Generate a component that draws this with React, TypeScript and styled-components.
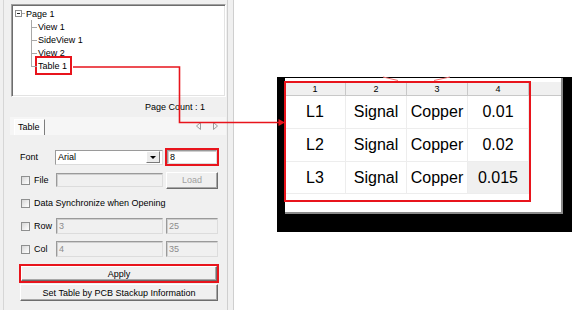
import React from 'react';
import styled, { createGlobalStyle } from 'styled-components';

const RED = '#e8141c';

const GlobalStyle = createGlobalStyle`
  html, body { margin: 0; padding: 0; background: #fff; width: 572px; height: 310px; overflow: hidden; }
  body { font-family: "Liberation Sans", Arial, sans-serif; font-size: 9px; color: #000; }
  * { box-sizing: border-box; }
`;

const Page = styled.div`
  position: relative;
  display: flex;
  width: 572px;
  height: 310px;
`;

const LeftPanel = styled.div`
  width: 228px;
  height: 100%;
  background: #f0f0f0;
  border-right: 1px solid #cfcfcf;
  box-shadow: inset 3px 0 0 #f0f0f0, inset 4px 0 0 #d6d6d6;
  display: flex;
  flex-direction: column;
`;

const Splitter = styled.div`
  width: 6px;
  height: 100%;
  background: #f0f0f0;
  border-right: 1px solid #cfcfcf;
`;

const RightArea = styled.div`
  flex: 1;
  padding: 77px 0 0 43px;
  background: #fff;
`;

/* ---------- tree ---------- */
const TreeBox = styled.div`
  margin: 4px 0 0 11px;
  width: 215px;
  height: 93px;
  background: #fff;
  border-style: solid;
  border-width: 1px;
  border-color: #a0a0a0 #ffffff #ffffff #a0a0a0;
  box-shadow: inset 1px 1px 0 #6d6d6d, inset -1px -1px 0 #e3e3e3;
  padding: 2px 0 0 3px;
`;

const TreeRow = styled.div`
  height: 13px;
  display: flex;
  align-items: center;
  white-space: nowrap;
`;

const ExpandBox = styled.span`
  position: relative;
  width: 7px;
  height: 7px;
  border: 1px solid #8f8f8f;
  background: #fff;
  &::after {
    content: '';
    position: absolute;
    left: 1px;
    top: 2px;
    width: 3px;
    height: 1px;
    background: #222;
  }
`;

const Tick = styled.span`
  width: 3px;
  height: 1px;
  background: #a8a8a8;
  margin-right: 1px;
`;

const ChildList = styled.div`
  margin-left: 16px;
`;

const ChildRow = styled(TreeRow)<{ $last?: boolean }>`
  position: relative;
  padding-left: 7px;
  &::before {
    content: '';
    position: absolute;
    left: 0;
    top: 0;
    width: 1px;
    height: ${(p) => (p.$last ? '50%' : '100%')};
    background: #a8a8a8;
  }
  &::after {
    content: '';
    position: absolute;
    left: 0;
    top: 50%;
    width: 6px;
    height: 1px;
    background: #a8a8a8;
  }
`;

const TreeLabel = styled.span<{ $marked?: boolean }>`
  display: inline-flex;
  align-items: center;
  ${(p) =>
    p.$marked
      ? `
    height: 19px;
    border: 2px solid ${RED};
    padding: 0 3px 0 1px;
    margin-left: -3px;
  `
      : ''}
`;

/* ---------- page count + tab ---------- */
const PageCountRow = styled.div`
  height: 20px;
  display: flex;
  justify-content: flex-end;
  align-items: center;
  padding-right: 22px;
`;

const TabStrip = styled.div`
  margin-left: 10px;
  width: 216px;
  height: 18px;
  display: flex;
  align-items: flex-end;
  background: #f6f6f6;
`;

const Tab = styled.div`
  margin-left: 4px;
  width: 31px;
  height: 16px;
  background: #fafafa;
  border-top: 1px solid #fff;
  border-left: 1px solid #fff;
  border-right: 1px solid #7d7d7d;
  padding-left: 3px;
  line-height: 14px;
`;

const TabArrows = styled.svg`
  margin-left: auto;
  margin-right: 7px;
  align-self: center;
`;

const TabPage = styled.div`
  flex: 1;
  display: flex;
  flex-direction: column;
  padding: 10.5px 0 0 20px;
`;

/* ---------- form ---------- */
const FormRow = styled.div`
  height: 23px;
  display: flex;
  align-items: center;
`;

const FieldLabel = styled.span<{ $w: number }>`
  width: ${(p) => p.$w}px;
  white-space: nowrap;
`;

const CheckGroup = styled.label<{ $w?: number }>`
  display: flex;
  align-items: center;
  gap: 4px;
  white-space: nowrap;
  ${(p) => (p.$w ? `width: ${p.$w}px;` : '')}
`;

const CheckBox = styled.span`
  width: 9px;
  height: 9px;
  margin-left: 1px;
  border: 1px solid #8e8f8f;
  background: linear-gradient(135deg, #d6d6d6 0%, #eeeeee 55%, #ffffff 100%);
`;

const TextBox = styled.div<{ $w: number; $h: number; $disabled?: boolean }>`
  width: ${(p) => p.$w}px;
  height: ${(p) => p.$h}px;
  background: ${(p) => (p.$disabled ? '#f0f0f0' : '#fff')};
  color: ${(p) => (p.$disabled ? '#8c8c8c' : '#000')};
  border: 1px solid;
  border-color: #9a9a9a #dcdcdc #dcdcdc #9a9a9a;
  box-shadow: inset 1px 1px 0 #cfcfcf;
  padding-left: 2px;
  display: flex;
  align-items: center;
`;

const Combo = styled.div`
  width: 108px;
  height: 15px;
  background: #fff;
  border: 1px solid;
  border-color: #9a9a9a #dcdcdc #dcdcdc #9a9a9a;
  display: flex;
  align-items: center;
  padding: 0 1px 0 2px;
`;

const ComboText = styled.span`
  flex: 1;
`;

const DropButton = styled.span`
  width: 14px;
  height: 12px;
  background: #ececec;
  border: 1px solid;
  border-color: #fff #7a7a7a #7a7a7a #fff;
  display: flex;
  align-items: center;
  justify-content: center;
  margin-right: 1px;
  &::after {
    content: '';
    width: 0;
    height: 0;
    border-left: 3px solid transparent;
    border-right: 3px solid transparent;
    border-top: 3px solid #000;
  }
`;

const RedFrame = styled.div<{ $w: number; $h: number; $ml?: number }>`
  width: ${(p) => p.$w}px;
  height: ${(p) => p.$h}px;
  margin-left: ${(p) => p.$ml ?? 0}px;
  border: 2px solid ${RED};
  display: flex;
`;

const Button = styled.div<{ $w?: number; $h?: number; $disabled?: boolean }>`
  ${(p) => (p.$w ? `width: ${p.$w}px;` : 'flex: 1;')}
  height: ${(p) => (p.$h ? `${p.$h}px` : 'auto')};
  background: #f0f0f0;
  color: ${(p) => (p.$disabled ? '#a0a0a0' : '#000')};
  border: 1px solid;
  border-color: #ffffff #6d6d6d #6d6d6d #ffffff;
  box-shadow: inset -1px -1px 0 #a8a8a8;
  display: flex;
  align-items: center;
  justify-content: center;
  white-space: nowrap;
`;

const Gap = styled.span<{ $w: number }>`
  width: ${(p) => p.$w}px;
  flex: none;
`;

const ButtonStack = styled.div`
  display: flex;
  flex-direction: column;
  gap: 1px;
  margin-top: 3.5px;
`;

/* ---------- table preview ---------- */
const BlackFrame = styled.div`
  width: 295px;
  height: 155px;
  background: #000;
  padding: 1px 9px 18px 8px;
  display: flex;
`;

const GridWindow = styled.div`
  position: relative;
  flex: 1;
  background: #fff;
  padding-top: 4px;
  border-right: 2px solid #8a8a8a;
  border-bottom: 2px solid #8a8a8a;
`;

const Grid = styled.div`
  display: grid;
  grid-template-columns: 61px 61px 61px 61px 1fr;
  grid-template-rows: 14px 33px 33px 32px;
`;

const HeadCell = styled.div<{ $filler?: boolean }>`
  background: #f0f0f0;
  border-bottom: 1px solid #c8c8c8;
  border-right: ${(p) => (p.$filler ? 'none' : '1px solid #c8c8c8')};
  font-size: 9px;
  display: flex;
  align-items: center;
  justify-content: center;
`;

const Cell = styled.div<{ $selected?: boolean }>`
  background: ${(p) => (p.$selected ? '#f0f0f0' : '#fff')};
  border-right: 1px solid #ededed;
  border-bottom: 1px solid #ededed;
  font-size: 16px;
  display: flex;
  align-items: center;
  justify-content: center;
`;

const EmptyCell = styled.div``;

const Highlight = styled.div`
  position: absolute;
  left: -1px;
  top: 3px;
  width: 247px;
  height: 121px;
  border: 2px solid ${RED};
  pointer-events: none;
`;

const Overlay = styled.svg`
  position: absolute;
  left: 0;
  top: 0;
  pointer-events: none;
`;

const rows = [
  ['L1', 'Signal', 'Copper', '0.01'],
  ['L2', 'Signal', 'Copper', '0.02'],
  ['L3', 'Signal', 'Copper', '0.015'],
];

export default function App() {
  return (
    <>
      <GlobalStyle />
      <Page>
        <LeftPanel>
          <TreeBox>
            <TreeRow>
              <ExpandBox />
              <Tick />
              <TreeLabel>Page 1</TreeLabel>
            </TreeRow>
            <ChildList>
              <ChildRow>
                <TreeLabel>View 1</TreeLabel>
              </ChildRow>
              <ChildRow>
                <TreeLabel>SideView 1</TreeLabel>
              </ChildRow>
              <ChildRow>
                <TreeLabel>View 2</TreeLabel>
              </ChildRow>
              <ChildRow $last>
                <TreeLabel $marked>Table 1</TreeLabel>
              </ChildRow>
            </ChildList>
          </TreeBox>

          <PageCountRow>Page Count : 1</PageCountRow>

          <TabStrip>
            <Tab>Table</Tab>
            <TabArrows width="24" height="8" viewBox="0 0 24 8">
              <polygon points="5.5,0.5 5.5,7.5 1.5,4" fill="none" stroke="#9a9a9a" strokeWidth="1" />
              <polygon points="18.5,0.5 18.5,7.5 22.5,4" fill="none" stroke="#9a9a9a" strokeWidth="1" />
            </TabArrows>
          </TabStrip>

          <TabPage>
            <FormRow>
              <FieldLabel $w={35}>Font</FieldLabel>
              <Combo>
                <ComboText>Arial</ComboText>
                <DropButton />
              </Combo>
              <Gap $w={2} />
              <RedFrame $w={54} $h={18}>
                <TextBox $w={50} $h={14}>8</TextBox>
              </RedFrame>
            </FormRow>

            <FormRow>
              <CheckGroup $w={36}>
                <CheckBox />
                File
              </CheckGroup>
              <TextBox $w={107} $h={14} $disabled />
              <Gap $w={3} />
              <Button $w={52} $h={17} $disabled>
                Load
              </Button>
            </FormRow>

            <FormRow>
              <CheckGroup>
                <CheckBox />
                Data Synchronize when Opening
              </CheckGroup>
            </FormRow>

            <FormRow>
              <CheckGroup $w={36}>
                <CheckBox />
                Row
              </CheckGroup>
              <TextBox $w={107} $h={16} $disabled>
                3
              </TextBox>
              <Gap $w={3} />
              <TextBox $w={52} $h={16} $disabled>
                25
              </TextBox>
            </FormRow>

            <FormRow>
              <CheckGroup $w={36}>
                <CheckBox />
                Col
              </CheckGroup>
              <TextBox $w={107} $h={16} $disabled>
                4
              </TextBox>
              <Gap $w={3} />
              <TextBox $w={52} $h={16} $disabled>
                35
              </TextBox>
            </FormRow>

            <ButtonStack>
              <RedFrame $w={200} $h={19} $ml={-1}>
                <Button>Apply</Button>
              </RedFrame>
              <Button $w={198} $h={17}>
                Set Table by PCB Stackup Information
              </Button>
            </ButtonStack>
          </TabPage>
        </LeftPanel>
        <Splitter />

        <RightArea>
          <BlackFrame>
            <GridWindow>
              <Grid>
                {['1', '2', '3', '4'].map((h) => (
                  <HeadCell key={h}>{h}</HeadCell>
                ))}
                <HeadCell $filler />
                {rows.map((r, ri) => (
                  <React.Fragment key={ri}>
                    {r.map((c, ci) => (
                      <Cell key={ci} $selected={ri === 2 && ci === 3}>
                        {c}
                      </Cell>
                    ))}
                    <EmptyCell />
                  </React.Fragment>
                ))}
              </Grid>
              <Highlight />
            </GridWindow>
          </BlackFrame>
        </RightArea>

        <Overlay width="572" height="310" viewBox="0 0 572 310">
          <path d="M73 67 H179.5 V122.5 H280" fill="none" stroke={RED} strokeWidth="1.6" />
          <polygon points="278.5,119 285,122.5 278.5,126" fill={RED} />
          <line x1="383" y1="77" x2="398" y2="80.5" stroke="#f07070" strokeWidth="1" />
          <line x1="434" y1="80.5" x2="450" y2="77" stroke="#f07070" strokeWidth="1" />
        </Overlay>
      </Page>
    </>
  );
}
